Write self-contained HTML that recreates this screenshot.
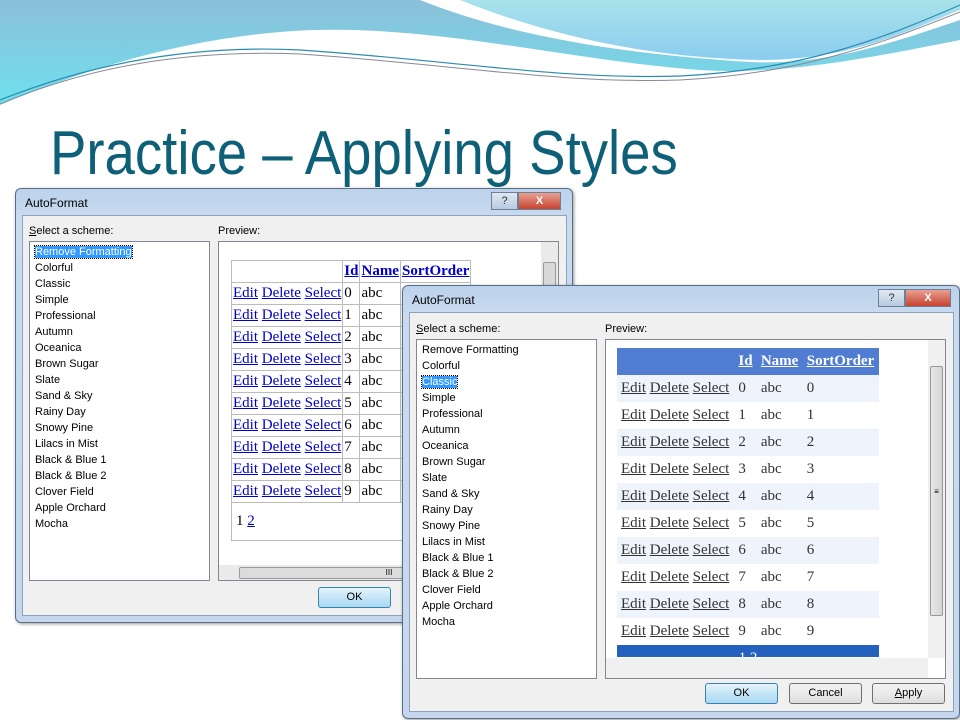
<!DOCTYPE html>
<html><head><meta charset="utf-8"><style>
*{margin:0;padding:0;box-sizing:border-box}
body{width:960px;height:720px;overflow:hidden;background:#fff;position:relative;font-family:"Liberation Sans",sans-serif}
.a{position:absolute}
.title{left:50px;top:118px;font-size:62px;color:#0e6078;white-space:nowrap;transform:scaleX(.88);transform-origin:left top;line-height:72px}
.dlg{position:absolute;border:1px solid #5a6f86;border-radius:6px;background:linear-gradient(#bcd2ec,#c9dbef 30px,#c4d7ed);box-shadow:1px 1px 3px rgba(0,0,0,.4)}
.dlg .t{position:absolute;left:9px;top:7px;font-size:12px;color:#000}
.panel{position:absolute;background:#f0f0f0;border:1px solid #8da2bb}
.lbl{position:absolute;font-size:11px;color:#000}
.box{position:absolute;background:#fff;border:1px solid #828790}
.list div{font-size:11px;height:16px;line-height:16px;padding-left:5px;color:#000}
.btn{position:absolute;height:21px;border:1px solid #707070;border-radius:3px;background:linear-gradient(#f2f2f2,#ebebeb 50%,#dcdcdc);font-size:11px;text-align:center;line-height:19px}
.btn.def{border-color:#3c7fb1;background:linear-gradient(#e5f4fc,#c4e5f6 50%,#a9d9f2)}
.cap{position:absolute;top:3px;height:18px;border:1px solid #6d7f94;font-size:11px;text-align:center;line-height:16px;color:#fff}
.t1 td{font-family:"Liberation Serif",serif;font-size:15px;color:#00c;border:1px solid #bbb;height:22px;padding:0 1px;white-space:nowrap}
.t1 a,.t2 a{text-decoration:underline}
.t2 td{font-family:"Liberation Serif",serif;font-size:15px;color:#333;height:27px;padding:0 4px;white-space:nowrap}
.sb{position:absolute;background:#eaeaea}
</style></head><body>
<svg class="a" style="left:0;top:0" width="960" height="120" viewBox="0 0 960 120">
<defs>
<linearGradient id="g1" x1="0" y1="0" x2="0" y2="1"><stop offset="0" stop-color="#8cbfd9"/><stop offset="1" stop-color="#6ee0ee"/></linearGradient>
<linearGradient id="g2" x1="0" y1="0" x2="0" y2="1"><stop offset="0" stop-color="#a8e2ea"/><stop offset="1" stop-color="#8bcdf0"/></linearGradient>
</defs>
<path d="M0 0 H960 V40 C860 60 780 75 700 70 C560 60 420 20 280 32 C160 42 60 80 0 105 Z" fill="url(#g1)"/>
<path d="M420 0 C520 40 640 55 750 62 C830 66 900 40 960 20 V0 Z" fill="#fff"/>
<path d="M460 0 C560 40 660 58 760 60 C850 60 910 30 960 10 V0 Z" fill="url(#g2)"/>
<path d="M0 100 C100 60 200 45 300 50 C450 60 560 80 680 76 C800 70 880 40 960 5" fill="none" stroke="#2a8cb0" stroke-width="1.2"/>
<path d="M0 104 C100 62 200 50 300 54 C450 64 560 84 680 80 C800 74 880 44 960 12" fill="none" stroke="#889" stroke-width="1"/>
</svg>
<div class="title a">Practice – Applying Styles</div>

<!-- Dialog 1 -->
<div class="dlg" style="left:15px;top:188px;width:558px;height:435px">
<div class="t">AutoFormat</div>
<div class="cap" style="left:475px;width:27px;background:linear-gradient(#dfe8f3,#b8cadf);color:#333">?</div>
<div class="cap" style="left:502px;width:43px;background:linear-gradient(#e8a093,#c7432e);font-weight:bold">X</div>
<div class="panel" style="left:6px;top:26px;width:545px;height:401px"></div>
<div class="lbl" style="left:13px;top:36px"><u>S</u>elect a scheme:</div>
<div class="lbl" style="left:202px;top:36px">Preview:</div>
<div class="box list" style="left:13px;top:52px;width:181px;height:340px;padding-top:2px">
<div><span style="background:#3399ff;color:#fff;outline:1px dotted #000">Remove Formatting</span></div><div>Colorful</div><div>Classic</div><div>Simple</div><div>Professional</div><div>Autumn</div><div>Oceanica</div><div>Brown Sugar</div><div>Slate</div><div>Sand &amp; Sky</div><div>Rainy Day</div><div>Snowy Pine</div><div>Lilacs in Mist</div><div>Black &amp; Blue 1</div><div>Black &amp; Blue 2</div><div>Clover Field</div><div>Apple Orchard</div><div>Mocha</div>
</div>
<div class="box" style="left:202px;top:52px;width:341px;height:340px;overflow:hidden">
<table class="t1 a" style="left:12px;top:18px;border-collapse:collapse;border:1px solid #999">
<tr><td></td><td><b><a>Id</a></b></td><td><b><a>Name</a></b></td><td><b><a>SortOrder</a></b></td></tr>
<tr><td><a>Edit</a> <a>Delete</a> <a>Select</a></td><td style="color:#000">0</td><td style="color:#000">abc</td><td></td></tr>
<tr><td><a>Edit</a> <a>Delete</a> <a>Select</a></td><td style="color:#000">1</td><td style="color:#000">abc</td><td></td></tr>
<tr><td><a>Edit</a> <a>Delete</a> <a>Select</a></td><td style="color:#000">2</td><td style="color:#000">abc</td><td></td></tr>
<tr><td><a>Edit</a> <a>Delete</a> <a>Select</a></td><td style="color:#000">3</td><td style="color:#000">abc</td><td></td></tr>
<tr><td><a>Edit</a> <a>Delete</a> <a>Select</a></td><td style="color:#000">4</td><td style="color:#000">abc</td><td></td></tr>
<tr><td><a>Edit</a> <a>Delete</a> <a>Select</a></td><td style="color:#000">5</td><td style="color:#000">abc</td><td></td></tr>
<tr><td><a>Edit</a> <a>Delete</a> <a>Select</a></td><td style="color:#000">6</td><td style="color:#000">abc</td><td></td></tr>
<tr><td><a>Edit</a> <a>Delete</a> <a>Select</a></td><td style="color:#000">7</td><td style="color:#000">abc</td><td></td></tr>
<tr><td><a>Edit</a> <a>Delete</a> <a>Select</a></td><td style="color:#000">8</td><td style="color:#000">abc</td><td></td></tr>
<tr><td><a>Edit</a> <a>Delete</a> <a>Select</a></td><td style="color:#000">9</td><td style="color:#000">abc</td><td></td></tr>
<tr><td colspan="4" style="height:38px;color:#000;padding-left:4px">1 <a style="color:#00c">2</a></td></tr>
</table>
<div class="sb" style="left:322px;top:0;width:17px;height:324px"></div>
<div class="a" style="left:324px;top:20px;width:13px;height:40px;background:#d8d8d8;border:1px solid #999;border-radius:2px"></div>
<div class="sb" style="left:0;top:323px;width:322px;height:16px"></div>
<div class="a" style="left:20px;top:325px;width:300px;height:12px;background:#dcdcdc;border:1px solid #999;border-radius:2px;font-size:8px;text-align:center">III</div>
</div>
<div class="btn def" style="left:302px;top:398px;width:73px">OK</div>
</div>

<!-- Dialog 2 -->
<div class="dlg" style="left:402px;top:285px;width:558px;height:434px">
<div class="t">AutoFormat</div>
<div class="cap" style="left:475px;width:27px;background:linear-gradient(#dfe8f3,#b8cadf);color:#333">?</div>
<div class="cap" style="left:502px;width:46px;background:linear-gradient(#e8a093,#c7432e);font-weight:bold">X</div>
<div class="panel" style="left:6px;top:26px;width:545px;height:400px"></div>
<div class="lbl" style="left:13px;top:37px"><u>S</u>elect a scheme:</div>
<div class="lbl" style="left:202px;top:37px">Preview:</div>
<div class="box list" style="left:13px;top:53px;width:181px;height:340px;padding-top:2px">
<div>Remove Formatting</div><div>Colorful</div><div><span style="background:#3399ff;color:#fff;outline:1px dotted #000">Classic</span></div><div>Simple</div><div>Professional</div><div>Autumn</div><div>Oceanica</div><div>Brown Sugar</div><div>Slate</div><div>Sand &amp; Sky</div><div>Rainy Day</div><div>Snowy Pine</div><div>Lilacs in Mist</div><div>Black &amp; Blue 1</div><div>Black &amp; Blue 2</div><div>Clover Field</div><div>Apple Orchard</div><div>Mocha</div>
</div>
<div class="box" style="left:202px;top:53px;width:341px;height:340px;overflow:hidden">
<table class="t2 a" style="left:11px;top:8px;width:262px;border-collapse:collapse">
<tr style="background:#507cd1"><td></td><td style="color:#fff"><b><a>Id</a></b></td><td style="color:#fff"><b><a>Name</a></b></td><td style="color:#fff"><b><a>SortOrder</a></b></td></tr>
<tr style="background:#eff3fb"><td><a>Edit</a> <a>Delete</a> <a>Select</a></td><td>0</td><td>abc</td><td>0</td></tr>
<tr><td><a>Edit</a> <a>Delete</a> <a>Select</a></td><td>1</td><td>abc</td><td>1</td></tr>
<tr style="background:#eff3fb"><td><a>Edit</a> <a>Delete</a> <a>Select</a></td><td>2</td><td>abc</td><td>2</td></tr>
<tr><td><a>Edit</a> <a>Delete</a> <a>Select</a></td><td>3</td><td>abc</td><td>3</td></tr>
<tr style="background:#eff3fb"><td><a>Edit</a> <a>Delete</a> <a>Select</a></td><td>4</td><td>abc</td><td>4</td></tr>
<tr><td><a>Edit</a> <a>Delete</a> <a>Select</a></td><td>5</td><td>abc</td><td>5</td></tr>
<tr style="background:#eff3fb"><td><a>Edit</a> <a>Delete</a> <a>Select</a></td><td>6</td><td>abc</td><td>6</td></tr>
<tr><td><a>Edit</a> <a>Delete</a> <a>Select</a></td><td>7</td><td>abc</td><td>7</td></tr>
<tr style="background:#eff3fb"><td><a>Edit</a> <a>Delete</a> <a>Select</a></td><td>8</td><td>abc</td><td>8</td></tr>
<tr><td><a>Edit</a> <a>Delete</a> <a>Select</a></td><td>9</td><td>abc</td><td>9</td></tr>
<tr style="background:#2461bf"><td colspan="4" style="text-align:center;color:#fff">1 2</td></tr>
</table>
<div class="a" style="left:0;top:317px;width:341px;height:23px;background:#fff"></div>
<div class="sb" style="left:322px;top:0;width:17px;height:318px;background:#f0f0f0"></div>
<div class="a" style="left:324px;top:26px;width:13px;height:250px;background:linear-gradient(90deg,#e8e8e8,#d4d4d4);border:1px solid #999;border-radius:2px;font-size:8px;text-align:center;line-height:250px">≡</div>
<div class="a" style="left:0;top:318px;width:322px;height:20px;background:#f0f0f0"></div>
</div>
<div class="btn def" style="left:302px;top:397px;width:73px">OK</div>
<div class="btn" style="left:386px;top:397px;width:73px">Cancel</div>
<div class="btn" style="left:469px;top:397px;width:73px"><u>A</u>pply</div>
</div>
</body></html>
